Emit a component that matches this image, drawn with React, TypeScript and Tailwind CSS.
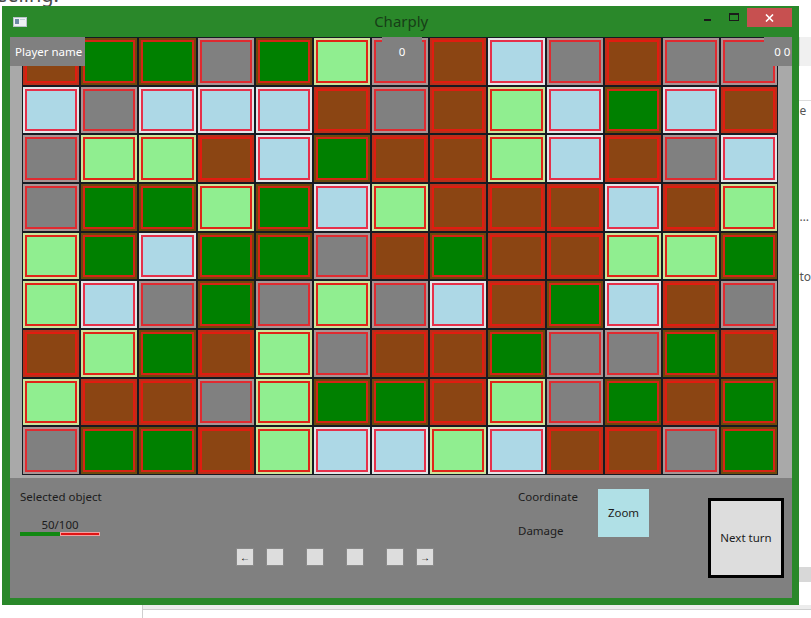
import React from "react";

type Kind = "b" | "g" | "s" | "l" | "c";

// b = brown, g = green, s = grey, l = light green, c = light blue
const board: Kind[][] = [
  ["b", "g", "g", "s", "g", "l", "s", "b", "c", "s", "b", "s", "s"],
  ["c", "s", "c", "c", "c", "b", "s", "b", "l", "c", "g", "c", "b"],
  ["s", "l", "l", "b", "c", "g", "b", "b", "l", "c", "b", "s", "c"],
  ["s", "g", "g", "l", "g", "c", "l", "b", "b", "b", "c", "b", "l"],
  ["l", "g", "c", "g", "g", "s", "b", "g", "b", "b", "l", "l", "g"],
  ["l", "c", "s", "g", "s", "l", "s", "c", "b", "g", "c", "b", "s"],
  ["b", "l", "g", "b", "l", "s", "b", "b", "g", "s", "s", "g", "b"],
  ["l", "b", "b", "s", "l", "g", "g", "b", "l", "s", "g", "b", "g"],
  ["s", "g", "g", "b", "l", "c", "c", "l", "c", "b", "b", "s", "g"],
];

const cellStyle: Record<Kind, { ring: string; fill: string; edge: string }> = {
  b: { ring: "bg-[#b8301a]", fill: "bg-[#8b4513]", edge: "border-[#e01c10]" },
  g: { ring: "bg-[#6e4a0c]", fill: "bg-[#008000]", edge: "border-[#d42414]" },
  s: { ring: "bg-[#a89494]", fill: "bg-[#808080]", edge: "border-[#e02a30]" },
  l: { ring: "bg-[#cce49a]", fill: "bg-[#90ee90]", edge: "border-[#e02418]" },
  c: { ring: "bg-[#e3e5e8]", fill: "bg-[#add8e6]", edge: "border-[#e6304a]" },
};

function Cell({ kind }: { kind: Kind }) {
  const s = cellStyle[kind];
  return (
    <div className={`border border-[#161a22] p-[2px] ${s.ring}`}>
      <div className={`h-full border-2 ${s.edge} ${s.fill}`} />
    </div>
  );
}

function SmallButton({ children, className = "" }: { children?: React.ReactNode; className?: string }) {
  return (
    <div
      className={`w-[18px] h-[18px] bg-[#dddddd] border border-[#8a8a8a] flex items-center justify-center text-[10px] leading-none text-black ${className}`}
    >
      {children}
    </div>
  );
}

export default function App() {
  return (
    <div className="w-[811px] h-[618px] bg-white overflow-hidden font-['Noto_Sans',sans-serif]">
      {/* text of the window behind, cut off at the top */}
      <div className="h-[6px] overflow-hidden">
        <p className="-mt-[15px] -ml-[4px] text-[20px] leading-[20px] text-[#4a4a4a]">eeling:</p>
      </div>

      <div className="flex">
        {/* Charply window */}
        <div className="ml-[2px] w-[800px] h-[599px] bg-[#2a882a] flex flex-col pl-[8px] pr-[7px] pb-[7px]">
          {/* Title bar */}
          <div className="h-[31px] grid grid-cols-[1fr_auto_1fr]">
            <div className="flex items-center pl-[3px] pt-[1px]">
              <svg width="14" height="10" viewBox="0 0 14 10">
                <rect x="0.5" y="0.5" width="13" height="9" fill="#eef2f4" stroke="#b8c4cc" />
                <rect x="2" y="2" width="4" height="5" fill="#6c8aa4" />
                <rect x="7" y="2" width="5" height="1" fill="#c4d0d8" />
              </svg>
            </div>
            <div className="flex items-center text-[15px] text-[#173e17]">Charply</div>
            <div className="flex justify-end items-start pt-[2px]">
              <div className="w-[26px] h-[19px] flex items-center justify-center pt-[5px]">
                <div className="w-[7px] h-[2px] bg-[#1a1a1a]" />
              </div>
              <div className="w-[27px] h-[19px] flex items-start justify-center pt-[5px]">
                <div className="w-[10px] h-[8px] border border-[#1a1a1a] border-t-2" />
              </div>
              <div className="w-[45px] h-[19px] bg-[#c75050] flex items-center justify-center">
                <svg width="9" height="8" viewBox="0 0 9 8">
                  <path d="M1 0.5 L8 7.5 M8 0.5 L1 7.5" stroke="#ffffff" strokeWidth="1.6" />
                </svg>
              </div>
            </div>
          </div>

          {/* Board area */}
          <div className="relative h-[441px] bg-[#a9a9a9] pl-[12px] pr-[14px] pb-[3px]">
            <div className="h-full grid grid-cols-[repeat(13,minmax(0,1fr))] grid-rows-[repeat(9,minmax(0,1fr))]">
              {board.map((row, r) => row.map((kind, c) => <Cell key={`${r}-${c}`} kind={kind} />))}
            </div>

            {/* score overlays */}
            <div className="absolute left-0 top-0 w-[75px] h-[29px] bg-[#808080] flex items-center pl-[5px] text-[11.5px] text-white">
              Player name
            </div>
            <div className="absolute left-[372px] top-0 w-[40px] h-[29px] bg-[#808080] flex items-center justify-center text-[11.5px] text-white">
              0
            </div>
            <div className="absolute right-0 top-0 w-[28px] h-[29px] bg-[#808080] flex items-center justify-end pr-[2px] text-[11.5px] text-white">
              0 0
            </div>
          </div>

          {/* Bottom panel */}
          <div className="flex-1 bg-[#808080] flex text-[11.5px] text-[#1c1c1c]">
            <div className="w-[508px] pl-[10px] pt-[11px]">
              <p className="leading-[16px]">Selected object</p>
              <p className="mt-[13px] w-[80px] text-center leading-[14px]">50/100</p>
              <div className="w-[80px] h-[4px] flex">
                <div className="w-[40px] bg-[#118811]" />
                <div className="flex-1 bg-[#e01414] border border-[#f2a0a0]" />
              </div>
              <div className="mt-[12px] ml-[216px] flex">
                <SmallButton>←</SmallButton>
                <SmallButton className="ml-[12px]" />
                <SmallButton className="ml-[22px]" />
                <SmallButton className="ml-[22px]" />
                <SmallButton className="ml-[22px]" />
                <SmallButton className="ml-[12px]">→</SmallButton>
              </div>
            </div>

            <div className="w-[80px] pt-[11px]">
              <p className="leading-[16px]">Coordinate</p>
              <p className="mt-[18px] leading-[16px]">Damage</p>
            </div>

            <div className="mt-[11px] w-[51px] h-[48px] bg-[#b0e0e6] flex items-center justify-center">
              Zoom
            </div>

            <div className="ml-[59px] mt-[20px] w-[76px] h-[80px] border-[3px] border-black bg-[#dddddd] flex items-center justify-center">
              Next turn
            </div>
          </div>
        </div>

        {/* edge of the window behind */}
        <div className="flex-1 flex flex-col text-[12px] text-[#555]">
          <div className="mt-[31px] h-[29px] bg-[#f0f0f0] border-l border-[#d8d8d8]" />
          <div className="mt-[34px] border-t border-[#dcdcdc]" />
          <p className="mt-[2px] leading-[16px]">e</p>
          <p className="mt-[90px] leading-[16px]">…</p>
          <p className="mt-[44px] leading-[16px]">to</p>
          <div className="mt-[282px] h-[15px] bg-[#d8d8d8]" />
        </div>
      </div>

      {/* below the window */}
      <div className="flex h-[13px]">
        <div className="w-[142px]" />
        <div className="flex-1 border-l border-[#cfcfcf]">
          <div className="h-[5px] bg-[#ececec] border-b border-[#cfcfcf]" />
        </div>
      </div>
    </div>
  );
}
